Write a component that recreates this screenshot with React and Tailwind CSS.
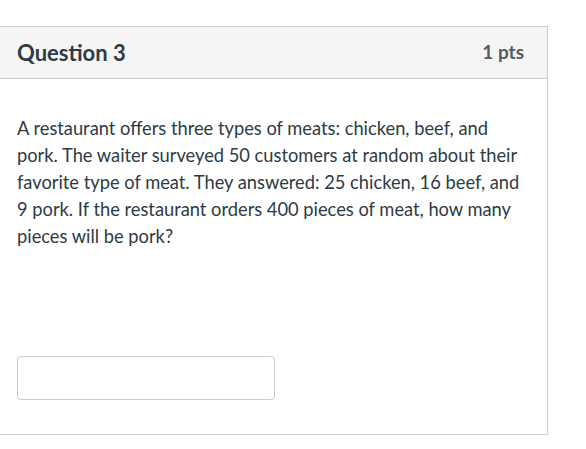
export default function App() {
  return (
    <div className="w-[586px] h-[449px] bg-white pt-[26px] font-['Lato',sans-serif] text-[#2d3b45]">
      <div className="w-[548px] border-y border-r border-[#c7cdd1]">
        {/* header */}
        <div className="h-[52px] flex items-center justify-between pl-[17px] pr-[23px] bg-[#f5f5f5] border-b border-[#c7cdd1]">
          <h2 className="text-[22px] font-bold">Question 3</h2>
          <span className="text-[19px] font-bold text-[#555d63]">1 pts</span>
        </div>

        {/* body */}
        <div className="pl-[17px] pr-[20px] pt-[36px] pb-[34px]">
          <p className="text-[18.3px] leading-[27px] max-w-[506px]">
            A restaurant offers three types of meats: chicken, beef, and pork. The waiter surveyed 50 customers at random about their favorite type of meat. They answered: 25 chicken, 16 beef, and 9 pork. If the restaurant orders 400 pieces of meat, how many pieces will be pork?
          </p>
          <input
            type="text"
            className="block mt-[106px] w-[258px] h-[44px] border border-[#c7cdd1] rounded-[4px] bg-white outline-none"
          />
        </div>
      </div>
    </div>
  );
}
